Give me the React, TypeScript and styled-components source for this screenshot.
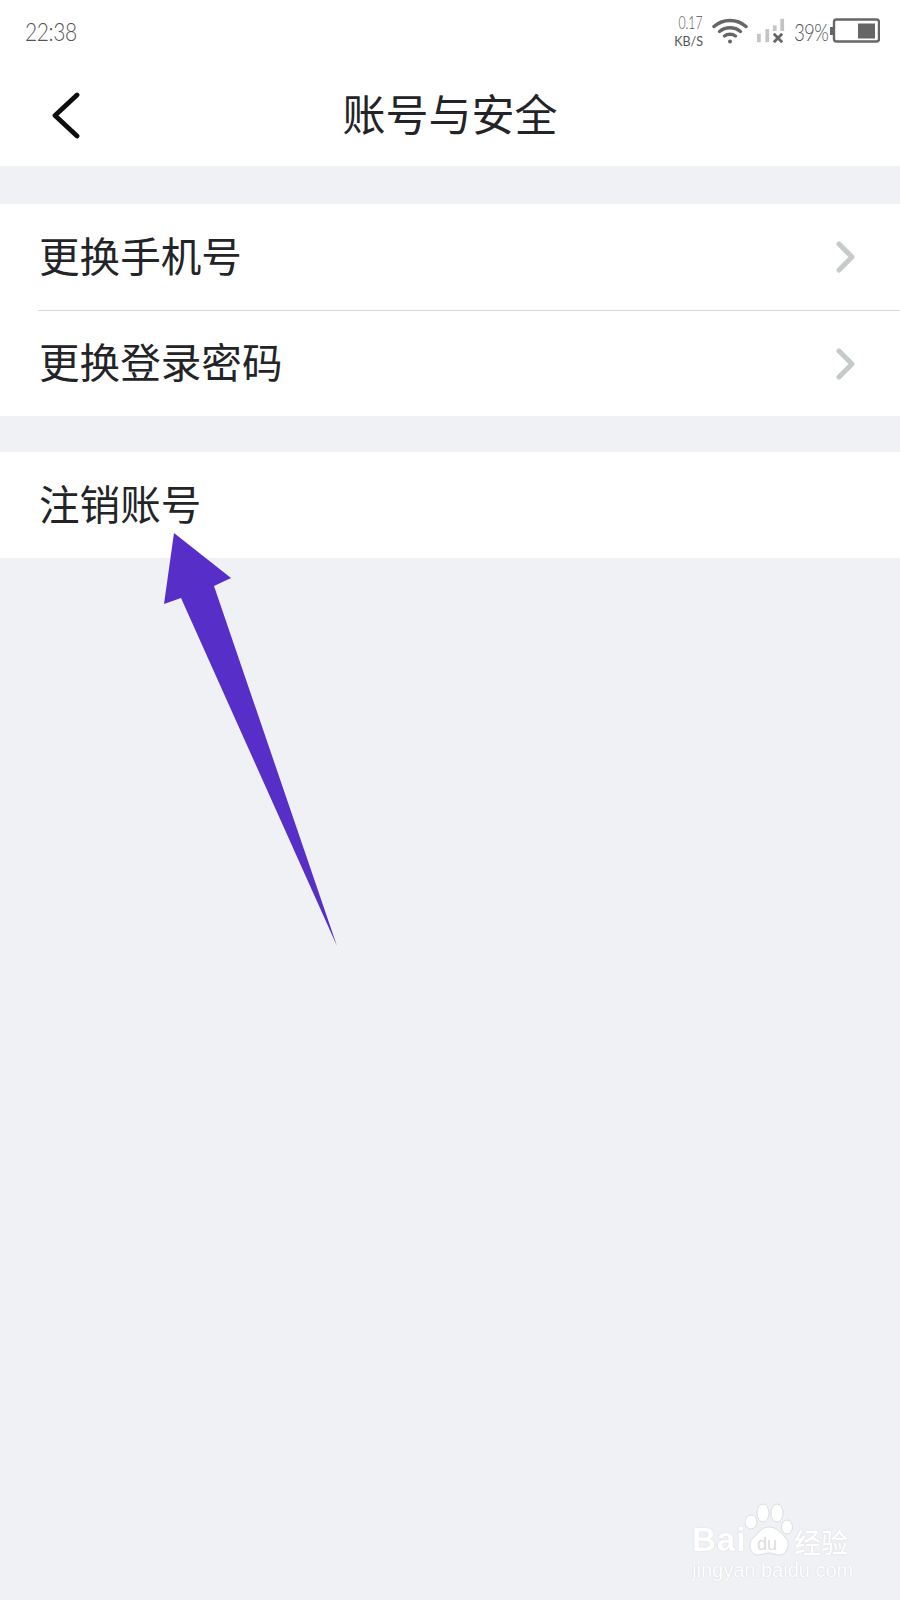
import React from "react";
import styled, { createGlobalStyle } from "styled-components";

const GlobalStyle = createGlobalStyle`
  html, body {
    margin: 0;
    padding: 0;
    background: #f0f1f4;
  }
  * {
    box-sizing: border-box;
  }
`;

const Page = styled.div`
  position: relative;
  width: 900px;
  height: 1600px;
  overflow: hidden;
  background: #f0f1f4;
  font-family: "Noto Sans CJK SC", "Liberation Sans", sans-serif;
  color: #222427;
`;

const Top = styled.div`
  background: #fff;
`;

const StatusBar = styled.div`
  display: flex;
  align-items: center;
  justify-content: space-between;
  height: 62px;
  padding: 0 20px 0 25px;
  font-family: Lato, "Liberation Sans", sans-serif;
  font-weight: 300;
  color: #555;
`;

const Clock = styled.span`
  font-size: 25px;
  letter-spacing: -0.5px;
  transform: scaleX(0.84);
  transform-origin: left center;
`;

const StatusRight = styled.div`
  display: flex;
  align-items: center;
`;

const Speed = styled.div`
  display: flex;
  flex-direction: column;
  align-items: flex-end;
  width: 28px;
  line-height: 1;
  margin-right: 9px;
  span:first-child {
    font-size: 17px;
    transform: scaleX(0.72);
    transform-origin: right center;
  }
  span:last-child {
    font-size: 12.5px;
    margin-top: 5px;
    font-weight: 400;
  }
`;

const Percent = styled.span`
  width: 34px;
  margin: 0 2px 0 9px;
  font-size: 24px;
  letter-spacing: -1px;
  white-space: nowrap;
  transform: scaleX(0.78);
  transform-origin: left center;
`;

const NavBar = styled.div`
  position: relative;
  display: flex;
  align-items: center;
  justify-content: center;
  height: 104px;
  padding-bottom: 3px;
`;

const BackIcon = styled.svg`
  position: absolute;
  left: 50px;
  top: 29px;
`;

const Title = styled.h1`
  margin: 0;
  font-size: 43px;
  font-weight: 400;
  line-height: 1;
`;

const Group = styled.div<{ $gap: number }>`
  margin-top: ${(p) => p.$gap}px;
  background: #fff;
`;

const Row = styled.div<{ $divider?: boolean; $height: number }>`
  display: flex;
  align-items: center;
  justify-content: space-between;
  height: ${(p) => p.$height}px;
  margin-left: 38px;
  padding: 0 45px 0 1px;
  border-bottom: ${(p) => (p.$divider ? "1px solid #d9dadc" : "none")};
`;

const RowLabel = styled.span`
  margin-bottom: 4px;
  font-size: 40.6px;
  line-height: 1;
`;

const Arrow = styled.svg`
  position: absolute;
  left: 0;
  top: 0;
`;

const Watermark = styled.div`
  position: absolute;
  left: 692px;
  top: 1502px;
  width: 165px;
  color: #fff;
  text-shadow: 0 0 1px #d5d6d9, 0 0 1px #d5d6d9;
`;

const MarkLine = styled.div`
  display: flex;
  align-items: flex-end;
  height: 54px;
`;

const MarkBrand = styled.span`
  width: 53px;
  font-family: "Liberation Sans", sans-serif;
  font-weight: 700;
  font-size: 33px;
  line-height: 32px;
  letter-spacing: 1px;
`;

const Paw = styled.div`
  position: relative;
  width: 49px;
  height: 54px;
  flex: none;
`;

const PawDu = styled.span`
  position: absolute;
  left: 12px;
  top: 32px;
  font-family: "Liberation Sans", sans-serif;
  font-size: 18px;
  line-height: 20px;
  color: #dcdde0;
  text-shadow: none;
`;

const MarkCn = styled.span`
  margin-bottom: -1px;
  font-size: 27px;
  line-height: 30px;
  font-weight: 500;
`;

const MarkUrl = styled.div`
  margin-top: 3px;
  font-family: "Liberation Sans", sans-serif;
  font-size: 20px;
  line-height: 22px;
`;

const Chevron = () => (
  <svg width="19" height="32" viewBox="0 0 19 32" fill="none">
    <path d="M3 3 L16 16 L3 29" stroke="#c5cbca" strokeWidth="5" strokeLinecap="round" strokeLinejoin="round" />
  </svg>
);

const Wifi = () => (
  <svg width="36" height="26" viewBox="0 0 36 26" fill="none" stroke="#666" strokeWidth="3.4" strokeLinecap="round">
    <path d="M2 8.5 C11 0.5 25 0.5 34 8.5" />
    <path d="M7.5 13.5 C13.5 8.5 22.5 8.5 28.5 13.5" />
    <path d="M12.5 18 C15.5 15.7 20.5 15.7 23.5 18" />
    <circle cx="18" cy="23.5" r="2" fill="#666" stroke="none" />
  </svg>
);

const SignalIcon = styled.svg`
  margin-left: 9px;
`;

const Signal = () => (
  <SignalIcon width="28" height="26" viewBox="0 0 30 26">
    <rect x="0" y="16" width="4" height="9" fill="#c4c4c4" />
    <rect x="9" y="11" width="4" height="14" fill="#c4c4c4" />
    <rect x="17" y="7" width="4" height="6" fill="#c4c4c4" />
    <rect x="25" y="0" width="4" height="13" fill="#c4c4c4" />
    <path d="M18 16 L27 25 M27 16 L18 25" stroke="#666" strokeWidth="3" />
  </SignalIcon>
);

const Battery = () => (
  <svg width="50" height="26" viewBox="0 0 50 26">
    <rect x="0" y="9" width="3" height="8" fill="#666" />
    <rect x="4" y="1.5" width="45" height="22" rx="2.5" fill="#fff" stroke="#666" strokeWidth="2.4" />
    <rect x="28" y="5.5" width="17" height="15" fill="#666" />
  </svg>
);

const App = (): JSX.Element => {
  return (
    <Page>
      <GlobalStyle />
      <Top>
        <StatusBar>
          <Clock>22:38</Clock>
          <StatusRight>
            <Speed>
              <span>0.17</span>
              <span>KB/S</span>
            </Speed>
            <Wifi />
            <Signal />
            <Percent>39%</Percent>
            <Battery />
          </StatusRight>
        </StatusBar>
        <NavBar>
          <BackIcon width="30" height="50" viewBox="0 0 30 50" fill="none">
            <path d="M27 4 L5 24.5 L27 45" stroke="#0d0d0d" strokeWidth="4.8" strokeLinecap="round" strokeLinejoin="round" />
          </BackIcon>
          <Title>账号与安全</Title>
        </NavBar>
      </Top>
      <Group $gap={38}>
        <Row $divider $height={107}>
          <RowLabel>更换手机号</RowLabel>
          <Chevron />
        </Row>
        <Row $height={105}>
          <RowLabel>更换登录密码</RowLabel>
          <Chevron />
        </Row>
      </Group>
      <Group $gap={36}>
        <Row $height={106}>
          <RowLabel>注销账号</RowLabel>
        </Row>
      </Group>
      <Arrow width="900" height="1600" viewBox="0 0 900 1600">
        <polygon points="174,533 231,578 214,586 337,946 181,598 164,604" fill="#572ec8" />
      </Arrow>
      <Watermark>
        <MarkLine>
          <MarkBrand>Bai</MarkBrand>
          <Paw>
            <svg width="49" height="54" viewBox="0 0 49 54" fill="#fff" stroke="#dcdde0" strokeWidth="1">
              <ellipse cx="6" cy="20" rx="6" ry="7" />
              <ellipse cx="18" cy="11" rx="6" ry="9" />
              <ellipse cx="32" cy="11" rx="6" ry="9" />
              <ellipse cx="42" cy="25" rx="5.5" ry="7" />
              <path d="M24 25 C32 25 35 31 40 35 C46 40 43 53 34 53 C30 53 28 51 24 51 C20 51 17 53 13 53 C5 53 2 42 8 36 C13 32 16 25 24 25 Z" />
            </svg>
            <PawDu>du</PawDu>
          </Paw>
          <MarkCn>经验</MarkCn>
        </MarkLine>
        <MarkUrl>jingyan.baidu.com</MarkUrl>
      </Watermark>
    </Page>
  );
};

export default App;
